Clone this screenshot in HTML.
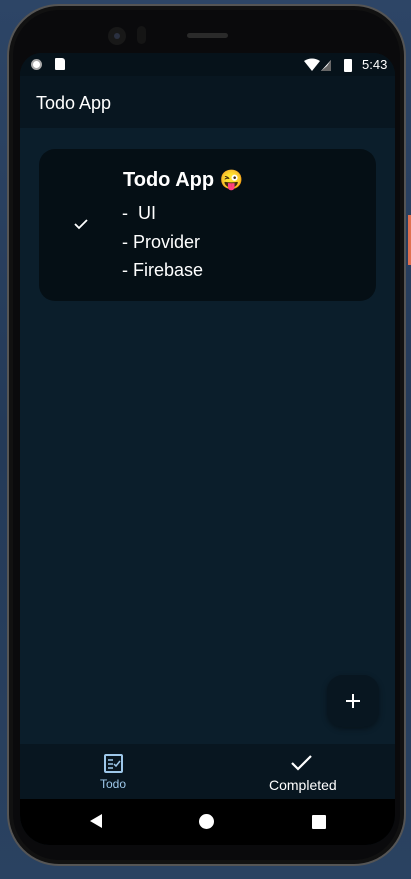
<!DOCTYPE html>
<html><head><meta charset="utf-8"><style>
*{margin:0;padding:0;box-sizing:border-box}
body{width:411px;height:879px;overflow:hidden;background:linear-gradient(180deg,#2d4566,#243a58 50%,#2a4261);font-family:"Liberation Sans","Noto Sans CJK JP",sans-serif;position:relative;color:#fff}
.phone{position:absolute;left:7px;top:4px;width:399px;height:862px;background:#0a0a0c;border-radius:52px;border:2px solid #555;box-shadow:inset 0 0 0 4px #111}
.scr{position:absolute;left:20px;top:53px;width:375px;height:792px;border-radius:22px 22px 30px 30px;overflow:hidden;background:#0b1e2b}
.abs{position:absolute}
</style></head><body>
<div class="phone"></div>
<div class="abs" style="left:408px;top:215px;width:3px;height:50px;background:#e07050"></div>
<div class="abs" style="left:108px;top:27px;width:18px;height:18px;border-radius:50%;background:#181818"></div>
<div class="abs" style="left:114px;top:33px;width:6px;height:6px;border-radius:50%;background:#2a3040"></div>
<div class="abs" style="left:137px;top:26px;width:9px;height:18px;border-radius:5px;background:#151515"></div>
<div class="abs" style="left:187px;top:33px;width:41px;height:5px;border-radius:3px;background:#2a2a2a"></div>
<div class="scr">
 <div class="abs" style="left:0;top:0;width:375px;height:23px;background:#06121a"></div>
 <div class="abs" style="left:11px;top:6px;width:11px;height:11px;border-radius:50%;background:#fff;border:2px solid #aaa"></div>
 <div class="abs" style="left:35px;top:5px;width:10px;height:12px;background:#fff;border-radius:1px 3px 1px 1px"></div>
 <svg class="abs" style="left:284px;top:5px" width="54" height="14"><path d="M0 3 Q8 -2 16 3 L8 13Z" fill="#fff"/><path d="M27 2 L27 13 L17 13Z" fill="#fff"/><path d="M23 8 L27 2 L27 13 L17 13Z" fill="#666"/><rect x="40" y="1" width="8" height="13" rx="1" fill="#fff"/></svg>
 <div class="abs" style="left:342px;top:4px;font-size:13px">5:43</div>
 <div class="abs" style="left:0;top:23px;width:375px;height:52px;background:#081620"></div>
 <div class="abs" style="left:16px;top:40px;font-size:18px">Todo App</div>
 <div class="abs" style="left:19px;top:96px;width:337px;height:152px;background:#050f15;border-radius:16px"></div>
 <svg class="abs" style="left:53px;top:164px" width="16" height="14"><path d="M2 7 L6 11 L14 3" stroke="#fff" stroke-width="1.8" fill="none"/></svg>
 <div class="abs" style="left:103px;top:115px;font-size:20px;font-weight:bold">Todo App <span style="font-size:19px">😜</span></div>
 <div class="abs" style="left:102px;top:146px;font-size:18px;line-height:28.5px">-&nbsp; UI<br>- Provider<br>- Firebase</div>
 <div class="abs" style="left:307px;top:622px;width:52px;height:52px;border-radius:16px;background:#081620;box-shadow:0 2px 6px rgba(0,0,0,.4)"></div>
 <svg class="abs" style="left:325px;top:640px" width="16" height="16"><path d="M8 1V15M1 8H15" stroke="#fff" stroke-width="2"/></svg>
 <div class="abs" style="left:0;top:691px;width:375px;height:55px;background:#081620"></div>
 <svg class="abs" style="left:83px;top:700px" width="22" height="22"><rect x="2" y="2" width="17" height="17" rx="1" stroke="#9ec8ea" stroke-width="2" fill="none"/><path d="M5 7H10M5 11H10M5 15H10" stroke="#9ec8ea" stroke-width="1.5"/><path d="M11 11L13 13 L17 8" stroke="#9ec8ea" stroke-width="1.5" fill="none"/></svg>
 <div class="abs" style="left:80px;top:724px;font-size:12px;color:#9ec8ea">Todo</div>
 <svg class="abs" style="left:270px;top:700px" width="24" height="20"><path d="M2 10 L8 16 L21 3" stroke="#fff" stroke-width="2.2" fill="none"/></svg>
 <div class="abs" style="left:249px;top:724px;font-size:14px">Completed</div>
 <div class="abs" style="left:0;top:746px;width:375px;height:46px;background:#000"></div>
 <svg class="abs" style="left:68px;top:760px" width="16" height="16"><path d="M2 8 L14 1 V15Z" fill="#fff"/></svg>
 <div class="abs" style="left:179px;top:761px;width:15px;height:15px;border-radius:50%;background:#fff"></div>
 <div class="abs" style="left:292px;top:762px;width:14px;height:14px;background:#fff;border-radius:1px"></div>
</div>
</body></html>
